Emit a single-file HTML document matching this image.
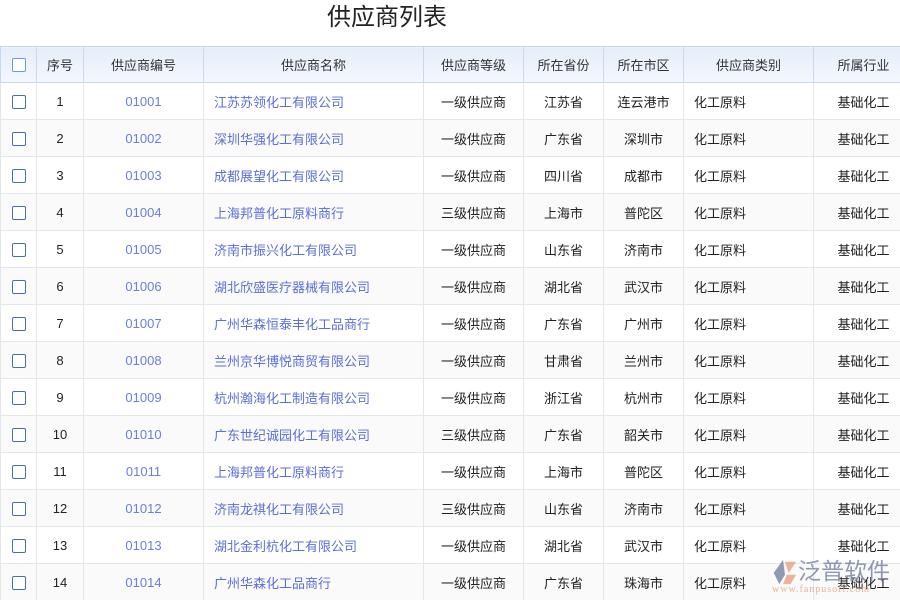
<!DOCTYPE html>
<html><head><meta charset="utf-8"><style>
body{margin:0;width:900px;height:600px;overflow:hidden;background:#fff;font-family:"Liberation Sans","Noto Sans CJK SC",sans-serif;font-size:13px;color:#222}
h1{margin:0;position:absolute;left:0;top:2px;width:774px;text-align:center;font-weight:normal;font-size:24px;line-height:32px;color:#222}
.wrap{position:absolute;top:46px;left:0;width:900px;height:554px;overflow:hidden}
table{border-collapse:collapse;table-layout:fixed;width:913px}
th,td{border:1px solid #e3e6ea;height:36px;padding:0;text-align:center;white-space:nowrap}
th{height:35px;background:linear-gradient(#e6eefa,#f4f8fe);border-color:#c9d8ec;font-weight:normal;color:#333}
tr:nth-child(odd) td{background:#fafafa}
td.n{text-align:left;padding-left:10px;color:#5b6fd6}
td.c{color:#6a7ee0}
td.t{text-align:left;padding-left:10px}
.cb{display:inline-block;width:12px;height:12px;border:1px solid #4a6ea8;border-radius:2px;vertical-align:middle;background:#fff}
th .cb{border-color:#6a9cd8}
.logo{position:absolute;left:768px;top:553px;width:130px;height:47px}
</style></head><body>
<h1>供应商列表</h1>
<div class="wrap"><table>
<colgroup><col style="width:36px"><col style="width:47px"><col style="width:120px"><col style="width:220px"><col style="width:100px"><col style="width:80px"><col style="width:80px"><col style="width:130px"><col style="width:100px"></colgroup>
<tr><th><span class="cb"></span></th><th>序号</th><th>供应商编号</th><th>供应商名称</th><th>供应商等级</th><th>所在省份</th><th>所在市区</th><th>供应商类别</th><th>所属行业</th></tr>
<tr><td><span class="cb"></span></td><td>1</td><td class="c">01001</td><td class="n">江苏苏领化工有限公司</td><td>一级供应商</td><td>江苏省</td><td>连云港市</td><td class="t">化工原料</td><td>基础化工</td></tr>
<tr><td><span class="cb"></span></td><td>2</td><td class="c">01002</td><td class="n">深圳华强化工有限公司</td><td>一级供应商</td><td>广东省</td><td>深圳市</td><td class="t">化工原料</td><td>基础化工</td></tr>
<tr><td><span class="cb"></span></td><td>3</td><td class="c">01003</td><td class="n">成都展望化工有限公司</td><td>一级供应商</td><td>四川省</td><td>成都市</td><td class="t">化工原料</td><td>基础化工</td></tr>
<tr><td><span class="cb"></span></td><td>4</td><td class="c">01004</td><td class="n">上海邦普化工原料商行</td><td>三级供应商</td><td>上海市</td><td>普陀区</td><td class="t">化工原料</td><td>基础化工</td></tr>
<tr><td><span class="cb"></span></td><td>5</td><td class="c">01005</td><td class="n">济南市振兴化工有限公司</td><td>一级供应商</td><td>山东省</td><td>济南市</td><td class="t">化工原料</td><td>基础化工</td></tr>
<tr><td><span class="cb"></span></td><td>6</td><td class="c">01006</td><td class="n">湖北欣盛医疗器械有限公司</td><td>一级供应商</td><td>湖北省</td><td>武汉市</td><td class="t">化工原料</td><td>基础化工</td></tr>
<tr><td><span class="cb"></span></td><td>7</td><td class="c">01007</td><td class="n">广州华森恒泰丰化工品商行</td><td>一级供应商</td><td>广东省</td><td>广州市</td><td class="t">化工原料</td><td>基础化工</td></tr>
<tr><td><span class="cb"></span></td><td>8</td><td class="c">01008</td><td class="n">兰州京华博悦商贸有限公司</td><td>一级供应商</td><td>甘肃省</td><td>兰州市</td><td class="t">化工原料</td><td>基础化工</td></tr>
<tr><td><span class="cb"></span></td><td>9</td><td class="c">01009</td><td class="n">杭州瀚海化工制造有限公司</td><td>一级供应商</td><td>浙江省</td><td>杭州市</td><td class="t">化工原料</td><td>基础化工</td></tr>
<tr><td><span class="cb"></span></td><td>10</td><td class="c">01010</td><td class="n">广东世纪诚园化工有限公司</td><td>三级供应商</td><td>广东省</td><td>韶关市</td><td class="t">化工原料</td><td>基础化工</td></tr>
<tr><td><span class="cb"></span></td><td>11</td><td class="c">01011</td><td class="n">上海邦普化工原料商行</td><td>一级供应商</td><td>上海市</td><td>普陀区</td><td class="t">化工原料</td><td>基础化工</td></tr>
<tr><td><span class="cb"></span></td><td>12</td><td class="c">01012</td><td class="n">济南龙祺化工有限公司</td><td>三级供应商</td><td>山东省</td><td>济南市</td><td class="t">化工原料</td><td>基础化工</td></tr>
<tr><td><span class="cb"></span></td><td>13</td><td class="c">01013</td><td class="n">湖北金利杭化工有限公司</td><td>一级供应商</td><td>湖北省</td><td>武汉市</td><td class="t">化工原料</td><td>基础化工</td></tr>
<tr><td><span class="cb"></span></td><td>14</td><td class="c">01014</td><td class="n">广州华森化工品商行</td><td>一级供应商</td><td>广东省</td><td>珠海市</td><td class="t">化工原料</td><td>基础化工</td></tr>
</table></div>
<div class="logo">
<svg width="28" height="28" viewBox="0 0 30 30" style="position:absolute;left:2px;top:5px;opacity:.75"><path d="M14 2 L4 16 L10 28 L16 18 Z" fill="#6b7a99"/><path d="M16 4 L28 4 L20 16 Z" fill="#e89a7a"/><path d="M18 18 L28 18 L22 28 L14 28 Z" fill="#e89a7a"/></svg>
<div style="position:absolute;left:30px;top:1px;font-size:23px;line-height:30px;color:#7a88a8;opacity:.85;font-family:'Noto Sans CJK SC',sans-serif">泛普软件</div>
<div style="position:absolute;left:4px;top:31px;font-size:10px;color:#e8a080;opacity:.8;font-family:'Liberation Serif',serif;letter-spacing:1px">www.fanpusoft.com</div>
</div>
</body></html>
